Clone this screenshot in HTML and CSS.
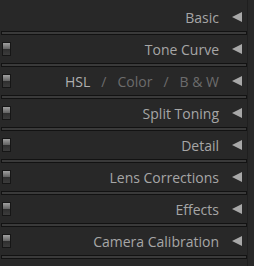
FILE: index.html
```html
<!DOCTYPE html>
<html lang="en">

<head>
  <meta charset="UTF-8">
  <title>Develop panels</title>
  <link rel="stylesheet" href="styles.css">
</head>

<body>
  <div class="panels">
    <div class="panel first">
      <div class="header">
        <span class="title">Basic</span>
        <span class="arrow"></span>
      </div>
      <div class="sep"></div>
    </div>

    <div class="panel">
      <div class="header">
        <span class="switch"></span>
        <span class="title">Tone Curve</span>
        <span class="arrow"></span>
      </div>
      <div class="sep"></div>
    </div>

    <div class="panel">
      <div class="header">
        <span class="switch"></span>
        <span class="title"><span class="active">HSL</span><span class="slash">/</span><span class="dim">Color</span><span class="slash">/</span><span class="dim">B &amp; W</span></span>
        <span class="arrow"></span>
      </div>
      <div class="sep"></div>
    </div>

    <div class="panel">
      <div class="header">
        <span class="switch"></span>
        <span class="title">Split Toning</span>
        <span class="arrow"></span>
      </div>
      <div class="sep"></div>
    </div>

    <div class="panel">
      <div class="header">
        <span class="switch"></span>
        <span class="title">Detail</span>
        <span class="arrow"></span>
      </div>
      <div class="sep"></div>
    </div>

    <div class="panel">
      <div class="header">
        <span class="switch"></span>
        <span class="title">Lens Corrections</span>
        <span class="arrow"></span>
      </div>
      <div class="sep"></div>
    </div>

    <div class="panel">
      <div class="header">
        <span class="switch"></span>
        <span class="title">Effects</span>
        <span class="arrow"></span>
      </div>
      <div class="sep"></div>
    </div>

    <div class="panel">
      <div class="header">
        <span class="switch"></span>
        <span class="title">Camera Calibration</span>
        <span class="arrow"></span>
      </div>
      <div class="sep"></div>
    </div>
  </div>
</body>

</html>
```

FILE: styles.css
```css
body {
  margin: 0;
  padding: 0;
  background-color: #282828;
  font-family: "Open Sans", sans-serif;
  width: 254px;
  height: 266px;
  overflow: hidden;
}

.panels {
  width: 247px;
  padding-top: 3px;
  border-right: 1px solid #1f1f1f;
  height: 263px;
}

.panel {
  display: flex;
  flex-direction: column;
}

.header {
  height: 28px;
  display: flex;
  align-items: center;
  padding-left: 2px;
}

.title {
  margin-left: auto;
  font-size: 14px;
  color: #a6a6a6;
  margin-right: 13px;
  display: flex;
  align-items: center;
}

.switch {
  width: 7px;
  height: 12px;
  border: 1px solid #161616;
  background: linear-gradient(#a0a0a0, #606060 50%, #2e2e2e 50%, #3c3c3c);
  margin-top: -1px;
}

.arrow {
  width: 0;
  height: 0;
  border-top: 5px solid transparent;
  border-bottom: 5px solid transparent;
  border-right: 10px solid #a8a8a8;
  margin-right: 5px;
}

.active {
  color: #b0b0b0;
}

.slash {
  color: #6c6c6c;
  margin: 0 11px;
}

.dim {
  color: #6c6c6c;
}

.sep {
  height: 2px;
  margin-left: 1px;
  border: 1px solid #121212;
  background-color: #3a3a3a;
}
```
